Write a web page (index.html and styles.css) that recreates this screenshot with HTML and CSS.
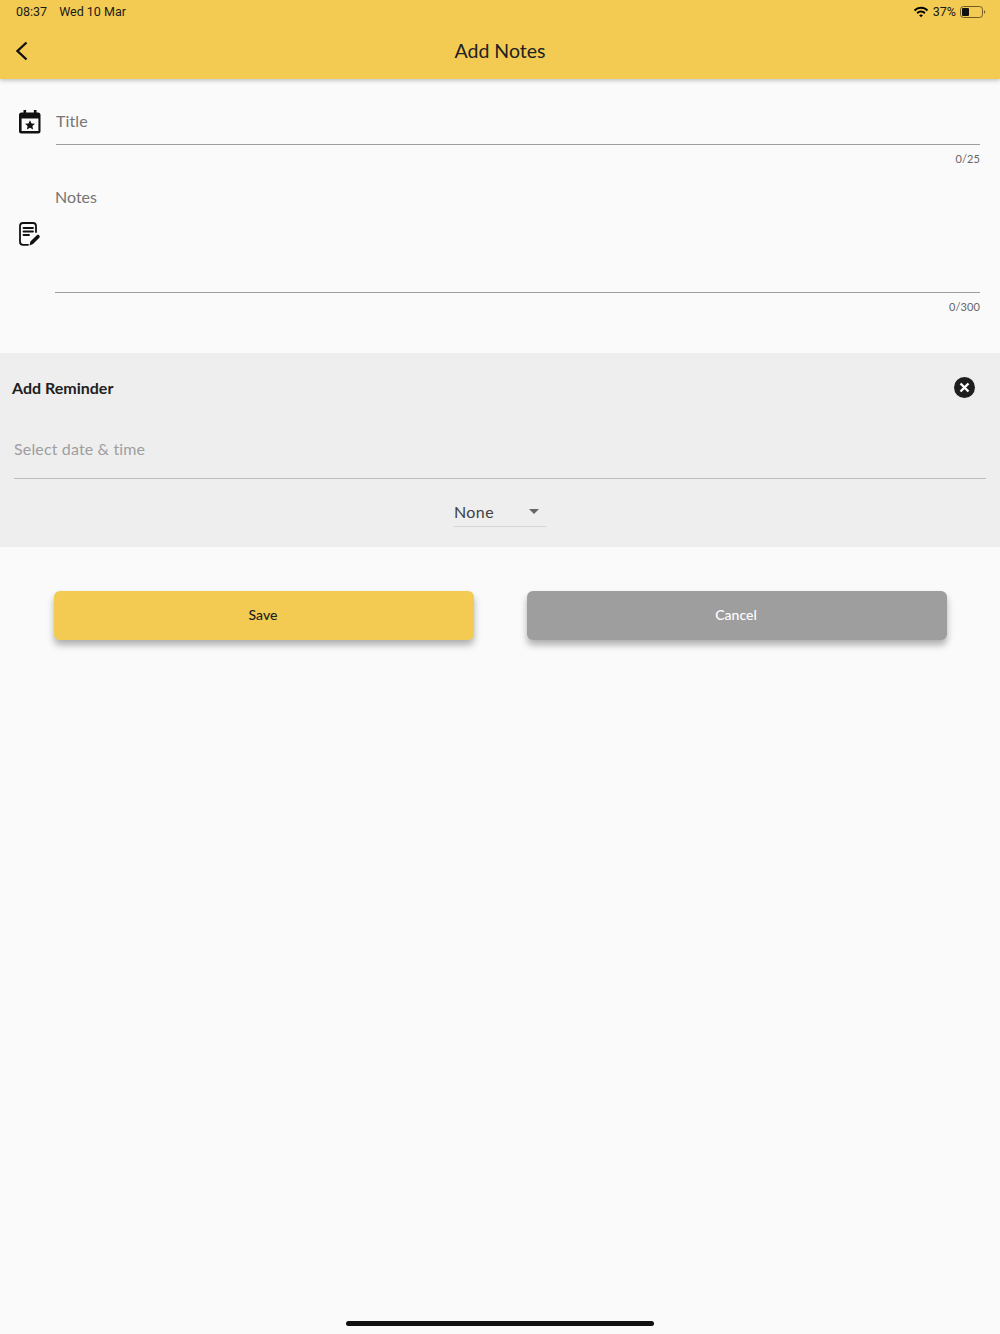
FILE: index.html
```html
<!DOCTYPE html>
<html lang="en">
<head>
  <meta charset="UTF-8" />
  <title>Add Notes</title>
  <link rel="stylesheet" href="styles.css">
</head>
<body>
  <header class="app-header">
    <div class="status-bar">
      <div class="status-left">
        <span>08:37</span>
        <span>Wed 10 Mar</span>
      </div>
      <div class="status-right">
        <svg class="wifi" width="16" height="12" viewBox="0 0 16 12">
          <path d="M8 .8c2.800 0 5.300 1.100 7.200 2.900l-1.400 1.500A8.300 8.300 0 0 0 8 2.800a8.300 8.300 0 0 0-5.800 2.400L.8 3.700A10.400 10.400 0 0 1 8 .8z"/>
          <path d="M8 4.600c1.700 0 3.300.700 4.500 1.800l-1.400 1.500A4.500 4.500 0 0 0 8 6.600c-1.200 0-2.300.500-3.100 1.300L3.500 6.400A6.500 6.500 0 0 1 8 4.600z"/>
          <path d="M8 8.400c.8 0 1.400.3 1.900.8L8 11.200 6.100 9.200c.5-.5 1.100-.8 1.900-.8z"/>
        </svg>
        <span>37%</span>
        <svg class="battery" width="26" height="12" viewBox="0 0 26 12">
          <rect x="0.500" y="0.500" width="22" height="11" rx="3" fill="none" stroke="#6f5c20"/>
          <rect x="2" y="2" width="7" height="8" rx="1" fill="#111"/>
          <path d="M24 4.200c.8.300 1.200 1 1.200 1.800s-.4 1.500-1.200 1.800z" fill="#6f5c20"/>
        </svg>
      </div>
    </div>
    <div class="nav-bar">
      <svg class="back-icon" width="14" height="20" viewBox="0 0 14 20">
        <path d="M11.500 1.500 2.500 10l9 8.500" fill="none" stroke="#111" stroke-width="2.400"/>
      </svg>
      <h1>Add Notes</h1>
    </div>
  </header>

  <main>
    <section class="fields">
      <div class="title-row">
        <svg class="field-icon" width="22" height="24" viewBox="0 0 22 24">
          <path d="M4.500 0h2.600v2.500h7.800V0h2.600v2.500h1.700c1.300 0 2.300 1 2.300 2.300v16.400c0 1.300-1 2.300-2.300 2.300H2.300C1 23.500 0 22.500 0 21.200V4.800c0-1.300 1-2.300 2.300-2.300h2.200zM2.600 8.500v12.400h16.800V8.500z" fill="#111" fill-rule="evenodd"/>
          <path d="m11 10.200 1.500 3.200 3.500.4-2.600 2.300.7 3.400-3.100-1.700-3.100 1.700.7-3.400L6 13.800l3.500-.4z" fill="#111"/>
        </svg>
        <div class="input-wrap">
          <div class="input-line title-line">Title</div>
          <div class="counter">0/25</div>
        </div>
      </div>
      <div class="notes-row">
        <svg class="field-icon notes-icon" width="21" height="24" viewBox="0 0 21 24">
          <path d="M9 22.800H4c-1.700 0-3-1.300-3-3V4c0-1.700 1.300-3 3-3h10c1.700 0 3 1.300 3 3v6" fill="none" stroke="#111" stroke-width="1.800" stroke-linecap="round"/>
          <path d="M4.500 6h9.500M4.500 9.500h9.500M4.500 13H10" stroke="#111" stroke-width="1.800" stroke-linecap="round"/>
          <path d="m10.500 23.500.9-4 6.400-6.300c.6-.6 1.600-.6 2.200 0l.3.300c.6.600.6 1.600 0 2.200l-6.300 6.400z" fill="#111"/>
        </svg>
        <div class="input-wrap">
          <div class="input-line notes-line">Notes</div>
          <div class="counter">0/300</div>
        </div>
      </div>
    </section>

    <section class="reminder">
      <div class="reminder-head">
        <h2>Add Reminder</h2>
        <svg width="21" height="21" viewBox="0 0 20 20">
          <circle cx="10" cy="10" r="10" fill="#1e1e1e"/>
          <path d="m6.200 6.200 7.600 7.600M13.800 6.200l-7.600 7.600" stroke="#fff" stroke-width="2.300"/>
        </svg>
      </div>
      <div class="date-field">Select date &amp; time</div>
      <div class="select-wrap">
        <div class="select">
          <span>None</span>
          <span class="caret"></span>
        </div>
      </div>
    </section>

    <section class="actions">
      <button class="btn btn-save">Save</button>
      <button class="btn btn-cancel">Cancel</button>
    </section>
  </main>

  <div class="home-indicator"></div>
</body>
</html>
```

FILE: styles.css
```css
:root {
  --yellow: #f3cb52;
  --page: #fafafa;
  --panel: #eeeeee;
  --line: #9e9e9e;
}

* {
  box-sizing: border-box;
}

html, body {
  margin: 0;
  height: 100%;
}

body {
  font-family: 'Lato', 'Noto Sans', sans-serif;
  background: var(--page);
  color: #212121;
  position: relative;
  overflow: hidden;
}

.app-header {
  height: 79px;
  background: var(--yellow);
  box-shadow: 0 2px 4px rgba(0,0,0,0.2);
  position: relative;
}

.status-bar {
  height: 23px;
  padding: 0 14px 0 16px;
  display: flex;
  align-items: center;
  justify-content: space-between;
  font-family: 'Roboto', sans-serif;
  font-size: 12.5px;
  color: #1a1a1a;
}

.status-left {
  display: flex;
  gap: 12px;
}

.status-right {
  display: flex;
  align-items: center;
  gap: 4px;
}

.nav-bar {
  height: 56px;
  display: flex;
  align-items: center;
  justify-content: center;
  position: relative;
}

.nav-bar h1 {
  margin: 0 0 1px;
  font-size: 19.5px;
  font-weight: 400;
  color: #212121;
}

.back-icon {
  position: absolute;
  left: 15px;
  top: 18px;
}

.fields {
  height: 274px;
  padding: 31px 20px 0 19px;
}

.title-row {
  display: flex;
  align-items: flex-start;
  gap: 15px;
}

.notes-row {
  display: flex;
  align-items: flex-start;
  gap: 15px;
  margin-top: 20px;
}

.input-wrap {
  flex: 1;
}

.input-line {
  color: #757575;
  font-size: 16px;
  border-bottom: 1px solid var(--line);
}

.title-line {
  height: 35px;
  line-height: 22px;
  letter-spacing: 0.1px;
}

.notes-line {
  height: 107px;
  line-height: 22px;
}

.counter {
  margin-top: 6px;
  text-align: right;
  font-size: 11px;
  letter-spacing: 0.1px;
  line-height: 15px;
  color: #666;
}

.field-icon {
  flex: none;
}

.notes-icon {
  margin-top: 36px;
}

.reminder {
  height: 194px;
  background: var(--panel);
  padding: 0 14px;
}

.reminder-head {
  height: 69px;
  margin-left: -2px;
  padding-right: 11px;
  display: flex;
  align-items: center;
  justify-content: space-between;
}

.reminder-head h2 {
  margin: 0;
  font-size: 16px;
  font-weight: 700;
  color: #212121;
}

.date-field {
  height: 57px;
  padding-top: 15px;
  font-size: 16px;
  letter-spacing: 0.15px;
  line-height: 24px;
  color: #9e9e9e;
  border-bottom: 1px solid #bdbdbd;
}

.select-wrap {
  display: flex;
  justify-content: center;
}

.select {
  width: 92px;
  height: 48px;
  padding: 17px 7px 0 0;
  display: flex;
  align-items: center;
  justify-content: space-between;
  font-size: 16px;
  letter-spacing: 0.4px;
  color: #424242;
  border-bottom: 1px solid #d6d6d6;
}

.caret {
  width: 0;
  height: 0;
  border-left: 5.5px solid transparent;
  border-right: 5.5px solid transparent;
  border-top: 5.5px solid #666;
}

.actions {
  padding: 44px 53px 0 54px;
  display: flex;
  justify-content: space-between;
}

.btn {
  width: 420px;
  height: 49px;
  padding: 0 2px 2px 0;
  border: none;
  border-radius: 6px;
  font-family: inherit;
  font-size: 14px;
  font-weight: 500;
  box-shadow: 0 5px 7px rgba(0,0,0,0.3);
}

.btn-save {
  background: var(--yellow);
  color: #212121;
}

.btn-cancel {
  background: var(--line);
  color: #fff;
}

.home-indicator {
  position: absolute;
  left: 346px;
  bottom: 8px;
  width: 308px;
  height: 5px;
  border-radius: 3px;
  background: #111;
}
```
